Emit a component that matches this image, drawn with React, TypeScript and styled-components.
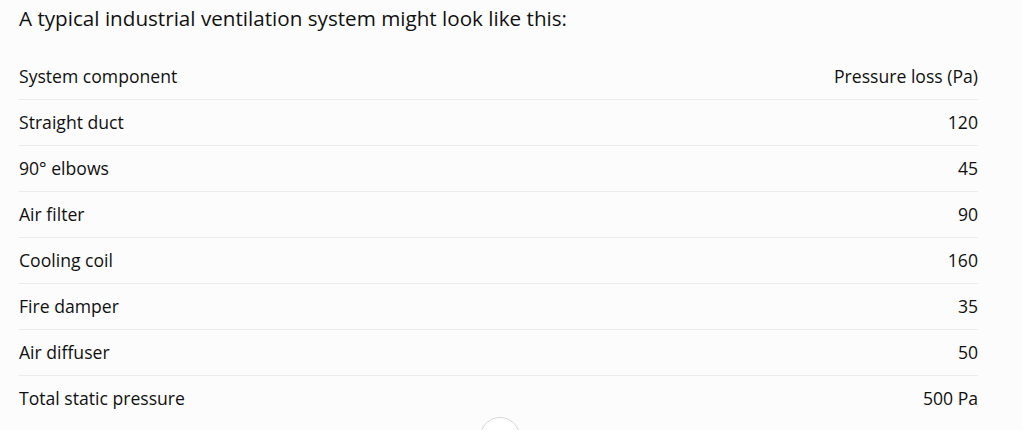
import React from "react";
import styled, { createGlobalStyle } from "styled-components";
import { ArrowDown } from "lucide-react";

const rows = [
  { name: "Straight duct", loss: "120" },
  { name: "90° elbows", loss: "45" },
  { name: "Air filter", loss: "90" },
  { name: "Cooling coil", loss: "160" },
  { name: "Fire damper", loss: "35" },
  { name: "Air diffuser", loss: "50" },
  { name: "Total static pressure", loss: "500 Pa" },
];

const GlobalStyle = createGlobalStyle`
  html, body {
    margin: 0;
    background: #fcfcfc;
    overflow: hidden;
  }
`;

const Page = styled.div`
  position: relative;
  box-sizing: border-box;
  height: 430px;
  overflow: hidden;
  padding: 4px 44px 0 19px;
  font-family: "Open Sans", sans-serif;
  color: #111;
`;

const Intro = styled.p`
  margin: 0 0 21px;
  font-size: 20.65px;
  line-height: 28px;
`;

const Table = styled.table`
  width: 100%;
  border-collapse: collapse;
  font-size: 17.6px;
`;

const Row = styled.tr<{ $last?: boolean }>`
  height: 46px;
  border-bottom: ${(p) => (p.$last ? "none" : "1px solid #ececec")};
`;

const Cell = styled.td<{ $right?: boolean }>`
  padding: 0;
  text-align: ${(p) => (p.$right ? "right" : "left")};
  vertical-align: middle;
`;

const ScrollButton = styled.button`
  position: absolute;
  left: 480px;
  top: 417px;
  width: 40px;
  height: 40px;
  border-radius: 50%;
  border: 1px solid #d8d8d8;
  background: #fff;
  display: flex;
  align-items: flex-start;
  justify-content: center;
  padding-top: 10px;
  color: #444;
`;

function App() {
  return (
    <Page>
      <GlobalStyle />
      <Intro>A typical industrial ventilation system might look like this:</Intro>
      <Table>
        <tbody>
          <Row>
            <Cell>System component</Cell>
            <Cell $right>Pressure loss (Pa)</Cell>
          </Row>
          {rows.map((r, i) => (
            <Row key={r.name} $last={i === rows.length - 1}>
              <Cell>{r.name}</Cell>
              <Cell $right>{r.loss}</Cell>
            </Row>
          ))}
        </tbody>
      </Table>
      <ScrollButton>
        <ArrowDown size={16} strokeWidth={1.5} />
      </ScrollButton>
    </Page>
  );
}

export default App;
